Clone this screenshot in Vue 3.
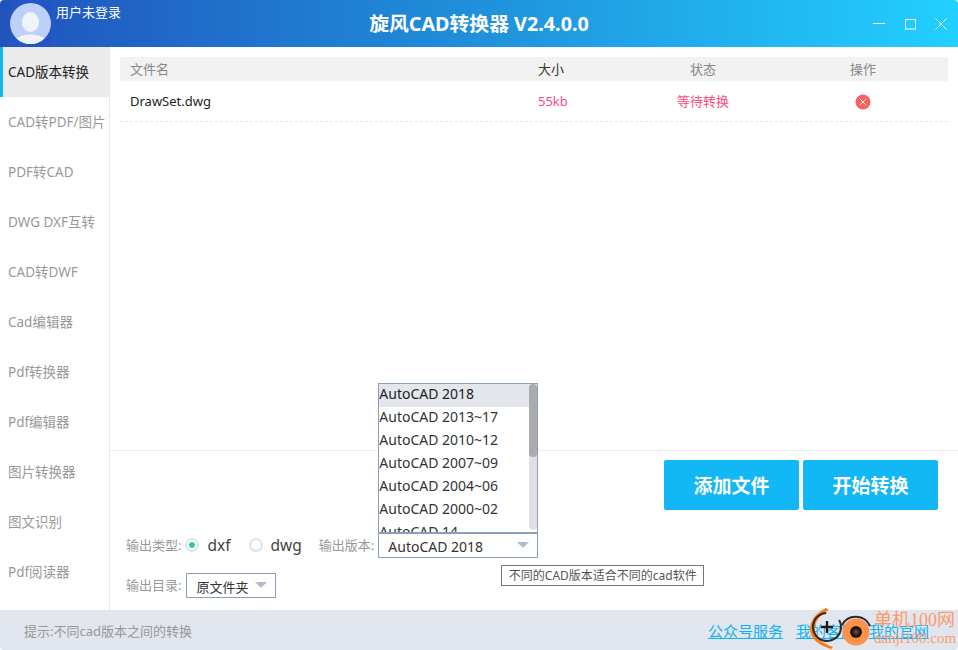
<template>
  <div class="app">
    <header class="titlebar">
      <div class="user">
        <div class="avatar">
          <svg width="42" height="47" viewBox="0 0 42 47">
            <defs>
              <clipPath id="avatarClip"><circle cx="20.5" cy="23.5" r="20.5" /></clipPath>
            </defs>
            <circle cx="20.5" cy="23.5" r="20.5" fill="#bcd0f8" />
            <g clip-path="url(#avatarClip)" fill="#f0f3f8">
              <ellipse cx="20.5" cy="22" rx="8.5" ry="10" />
              <ellipse cx="20.5" cy="44" rx="17" ry="9.5" />
            </g>
          </svg>
        </div>
        <span class="user-name">用户未登录</span>
      </div>
      <h1 class="app-title">旋风CAD转换器 V2.4.0.0</h1>
      <div class="win-btns">
        <svg width="14" height="14" viewBox="0 0 14 14"><path d="M-1 7.5H11" stroke="#fff" fill="none" /></svg>
        <svg width="14" height="14" viewBox="0 0 14 14"><rect x="1.5" y="3.5" width="10" height="9.5" stroke="#fff" fill="none" /></svg>
        <svg width="14" height="14" viewBox="0 0 14 14"><path d="M1.5 2.5L12.5 13.5M12.5 2.5L1.5 13.5" stroke="#fff" fill="none" stroke-width="0.9" /></svg>
      </div>
    </header>

    <div class="body">
      <nav class="sidebar">
        <div
          v-for="(item, i) in menu"
          :key="item"
          class="menu-item"
          :class="{ active: i === 0 }"
        >{{ item }}</div>
      </nav>

      <main class="main">
        <section class="table-area">
          <div class="table-head">
            <span class="col-name">文件名</span>
            <span class="size-head">大小</span>
            <span class="col-center">状态</span>
            <span class="col-center">操作</span>
          </div>
          <div class="table-row">
            <span class="col-name file-name">DrawSet.dwg</span>
            <span class="pink">55kb</span>
            <span class="col-center pink">等待转换</span>
            <span class="col-center">
              <svg class="del" width="16" height="16" viewBox="0 0 16 16">
                <circle cx="8" cy="8" r="7.5" fill="#fb6161" />
                <path d="M4.8 4.8L11.2 11.2M11.2 4.8L4.8 11.2" stroke="#fff" stroke-width="0.9" fill="none" />
              </svg>
            </span>
          </div>
        </section>

        <section class="panel">
          <div class="actions">
            <button class="big-btn">添加文件</button>
            <button class="big-btn">开始转换</button>
          </div>
          <div class="opt-row type-row">
            <span class="opt-label">输出类型:</span>
            <span class="radio on"></span>
            <span class="radio-text">dxf</span>
            <span class="radio second"></span>
            <span class="radio-text">dwg</span>
            <span class="opt-label version-label">输出版本:</span>
            <div class="version-wrap">
              <ul class="version-list">
                <li
                  v-for="(v, i) in versions"
                  :key="v"
                  :class="{ current: i === 0 }"
                >{{ v }}</li>
                <div class="scroll-track"><div class="scroll-thumb"></div></div>
              </ul>
              <div class="select version-select">
                <span class="select-text">AutoCAD 2018</span>
                <i class="arrow"></i>
              </div>
              <div class="tooltip">不同的CAD版本适合不同的cad软件</div>
            </div>
          </div>
          <div class="opt-row dir-row">
            <span class="opt-label">输出目录:</span>
            <div class="select dir-select">
              <span class="dir-text">原文件夹</span>
              <i class="arrow"></i>
            </div>
          </div>
        </section>
      </main>
    </div>

    <footer class="footer">
      <span class="hint">提示:不同cad版本之间的转换</span>
      <div class="links">
        <a>公众号服务</a>
        <a>我的客服</a>
        <a>我的官网</a>
      </div>
      <div class="watermark">
        <svg class="wm-logo" width="64" height="44" viewBox="0 0 64 44">
          <path d="M16 1C6 6 0 13 0 22C0 31 8 38 21 42L23 40C12 36 5 31 5 22C5 13 11 7 19 3Z" fill="#ff7a14" />
          <circle cx="17" cy="20" r="14" fill="none" stroke="#2a2a2a" stroke-width="2" stroke-dasharray="72 16" transform="rotate(-30 17 20)" />
          <path d="M11 20H23M17 14V26" stroke="#1c1c1c" stroke-width="2.4" fill="none" />
          <circle cx="46" cy="25" r="13.5" fill="#ff9148" />
          <path d="M32 18A15.5 15.5 0 0 1 60 19" stroke="#2a2a2a" stroke-width="2" fill="none" />
          <circle cx="46" cy="25" r="6" fill="#1f1a18" />
          <circle cx="46" cy="25" r="2.5" fill="#6b3a1c" />
        </svg>
        <div class="wm-text">
          <span class="wm-cn">单机100网</span>
          <span class="wm-en">danji100.com</span>
        </div>
      </div>
    </footer>
  </div>
</template>

<script setup>
const menu = [
  'CAD版本转换',
  'CAD转PDF/图片',
  'PDF转CAD',
  'DWG DXF互转',
  'CAD转DWF',
  'Cad编辑器',
  'Pdf转换器',
  'Pdf编辑器',
  '图片转换器',
  '图文识别',
  'Pdf阅读器',
]

const versions = [
  'AutoCAD 2018',
  'AutoCAD 2013~17',
  'AutoCAD 2010~12',
  'AutoCAD 2007~09',
  'AutoCAD 2004~06',
  'AutoCAD 2000~02',
  'AutoCAD 14',
]
</script>

<style>
html,
body {
  margin: 0;
  background: #fff;
}
</style>

<style scoped>
.app {
  width: 958px;
  height: 650px;
  display: flex;
  flex-direction: column;
  overflow: hidden;
  border-radius: 4px;
  font-family: "Noto Sans", "Noto Sans CJK SC", sans-serif;
  font-size: 13px;
  color: #333;
  background: #fff;
}

.titlebar {
  height: 47px;
  flex: none;
  position: relative;
  display: flex;
  align-items: center;
  justify-content: center;
  background: linear-gradient(90deg, #2153bd 0%, #1f8ad8 45%, #22d0ff 100%);
  color: #fff;
}

.user {
  position: absolute;
  left: 10px;
  top: 0;
  display: flex;
}

.avatar {
  width: 42px;
  height: 47px;
  background: #2356c4;
}

.avatar svg {
  display: block;
}

.user-name {
  margin: 3px 0 0 4px;
  font-size: 13px;
  line-height: 18px;
}

.app-title {
  margin: 0;
  font-size: 19.8px;
  font-weight: 700;
  line-height: 47px;
}

.win-btns {
  position: absolute;
  right: 10px;
  top: 16px;
  display: flex;
  gap: 16px;
}

.win-btns svg {
  overflow: visible;
}

.body {
  flex: 1;
  display: flex;
  min-height: 0;
}

.sidebar {
  width: 109px;
  flex: none;
  border-right: 1px solid #e8e8e8;
}

.menu-item {
  height: 50px;
  padding: 1px 0 0 8px;
  line-height: 48px;
  font-size: 13.5px;
  color: #999;
  white-space: nowrap;
  box-sizing: border-box;
}

.menu-item.active {
  background: #ebebeb;
  border-left: 3px solid #12b7f5;
  padding-left: 5px;
  color: #222;
}

.main {
  flex: 1;
  display: flex;
  flex-direction: column;
  min-width: 0;
}

.table-area {
  height: 404px;
  flex: none;
  box-sizing: border-box;
  padding: 10px 10px 0 10px;
  border-bottom: 1px solid #ececec;
}

.table-head,
.table-row {
  display: grid;
  grid-template-columns: 418px 85px 160px 160px;
}

.table-head {
  height: 24px;
  line-height: 24px;
  background: #f2f2f2;
  color: #888;
}

.size-head {
  color: #333;
}

.table-row {
  height: 40px;
  line-height: 40px;
  border-bottom: 1px dashed #e8e8e8;
  color: #222;
}

.col-name {
  padding-left: 10px;
}

.col-center {
  text-align: center;
}

.pink {
  color: #fb4d80;
}

.del {
  vertical-align: middle;
  margin-top: -2px;
}

.panel {
  flex: 1;
  position: relative;
  padding: 9px 20px 0 16px;
}

.actions {
  display: flex;
  justify-content: flex-end;
  gap: 4px;
}

.big-btn {
  width: 135px;
  height: 50px;
  border: none;
  border-radius: 2px;
  background: #12b7f5;
  color: #fff;
  font-family: inherit;
  font-size: 19px;
  font-weight: 700;
}

.opt-row {
  display: flex;
  align-items: center;
  height: 23px;
}

.type-row {
  margin-top: 23px;
}

.dir-row {
  margin-top: 17px;
}

.opt-label {
  color: #999;
  white-space: nowrap;
}

.radio {
  width: 10px;
  height: 10px;
  border: 2px solid #dfe3e8;
  border-radius: 50%;
  margin-left: 4px;
  position: relative;
  flex: none;
}

.radio.on::after {
  content: "";
  position: absolute;
  left: 2px;
  top: 2px;
  width: 6px;
  height: 6px;
  border-radius: 50%;
  background: #2fcba8;
}

.radio.second {
  margin-left: 18px;
}

.radio-text {
  margin-left: 8px;
  font-size: 15.5px;
  color: #444;
}

.version-label {
  margin-left: 17px;
}

.version-wrap {
  position: relative;
  align-self: flex-start;
  margin-left: 4px;
}

.select {
  box-sizing: border-box;
  height: 25px;
  border: 1px solid #8a9fbb;
  background: #fff;
  display: flex;
  align-items: center;
  justify-content: space-between;
  color: #333;
}

.select-text {
  padding-top: 2px;
}

.dir-text {
  padding-top: 1px;
}

.version-select {
  width: 160px;
  padding: 0 8px 0 9px;
  font-size: 14px;
}

.dir-select {
  width: 90px;
  align-self: flex-start;
  margin-left: 5px;
  padding: 0 8px 0 9px;
}

.arrow {
  width: 0;
  height: 0;
  border-left: 6px solid transparent;
  border-right: 6px solid transparent;
  border-top: 6px solid #b4bccb;
  margin-bottom: 1px;
}

.version-list {
  position: absolute;
  left: 0;
  bottom: 24px;
  width: 160px;
  height: 151px;
  box-sizing: border-box;
  margin: 0;
  padding: 0;
  list-style: none;
  border: 1px solid #8a9fbb;
  border-bottom-width: 2px;
  background: #fff;
  overflow: hidden;
  font-size: 14px;
  color: #333;
}

.version-list li {
  height: 23px;
  line-height: 19px;
  white-space: nowrap;
}

.version-list li.current {
  background: #e3e6eb;
  color: #222;
}

.scroll-track {
  position: absolute;
  right: 0;
  top: 0;
  bottom: 2px;
  width: 8px;
  background: #e0e0e0;
  border-radius: 4px;
}

.scroll-thumb {
  height: 73px;
  border-radius: 4px;
  background: #ababab;
}

.tooltip {
  position: absolute;
  left: 123px;
  top: 32px;
  width: 203px;
  height: 21px;
  box-sizing: border-box;
  border: 1px solid #767676;
  background: #fff;
  font-size: 12px;
  line-height: 19px;
  text-align: center;
  color: #555;
  white-space: nowrap;
}

.footer {
  height: 40px;
  flex: none;
  position: relative;
  display: flex;
  align-items: center;
  justify-content: space-between;
  padding: 0 29px 0 24px;
  background: #e1e5ee;
}

.hint {
  color: #999;
}

.links {
  display: flex;
  gap: 13px;
}

.links a {
  color: #12b0f5;
  font-size: 15px;
  text-decoration: underline;
}

.watermark {
  position: absolute;
  left: 810px;
  top: -3px;
  width: 148px;
  height: 44px;
}

.wm-logo {
  position: absolute;
  left: 0;
  top: 0;
}

.wm-text {
  position: absolute;
  left: 64px;
  top: 4px;
  display: flex;
  flex-direction: column;
  align-items: flex-start;
  font-family: "Liberation Serif", "Noto Sans CJK SC", serif;
  color: #ff9a66;
  white-space: nowrap;
}

.wm-cn {
  font-size: 18px;
  line-height: 19px;
}

.wm-en {
  font-size: 15px;
  line-height: 16px;
}
</style>
